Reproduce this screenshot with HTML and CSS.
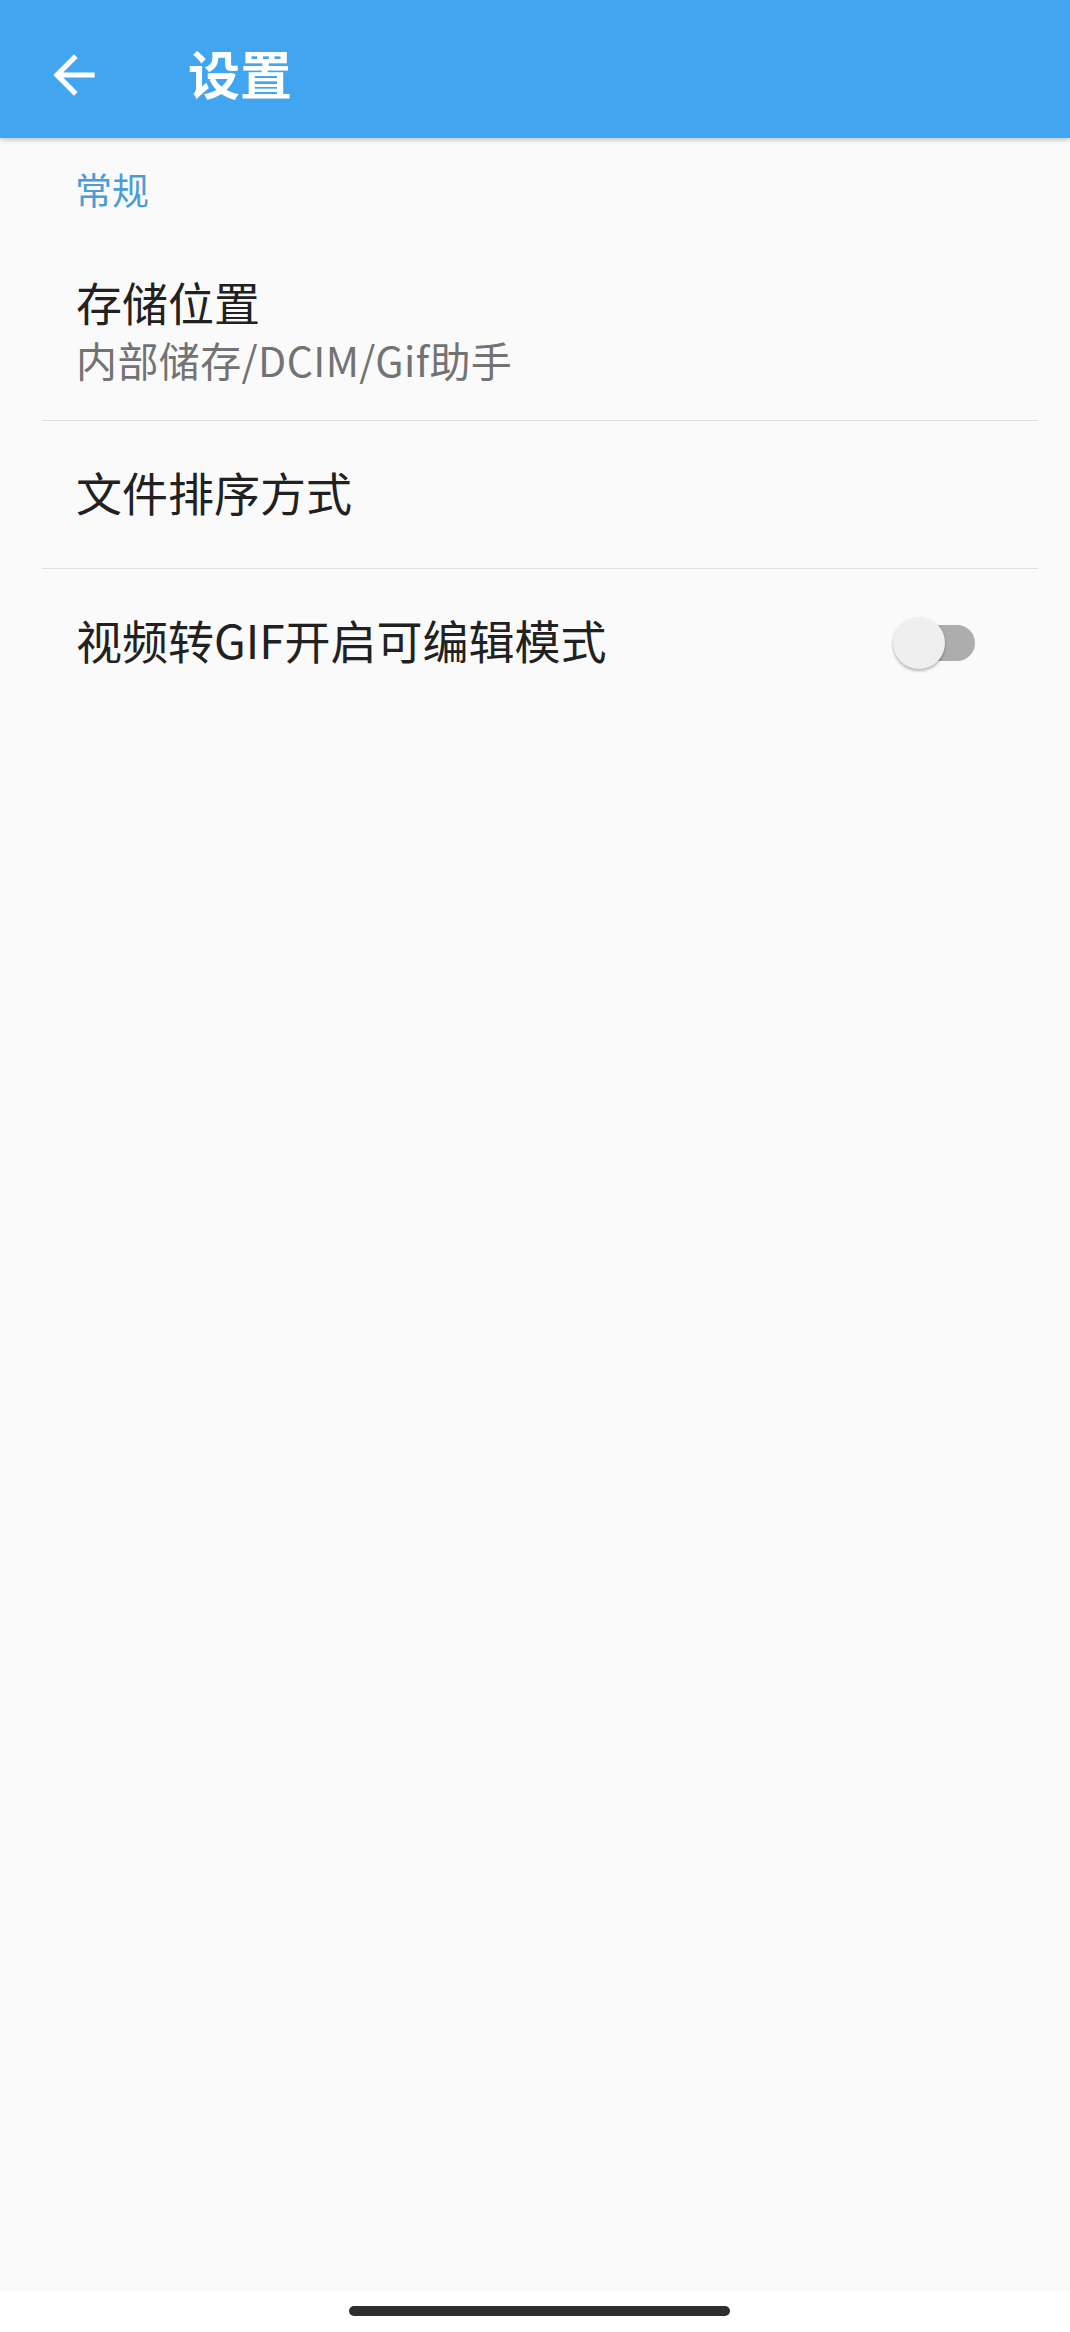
FILE: index.html
```html
<!DOCTYPE html>
<html lang="zh-CN">
<head>
  <meta charset="UTF-8">
  <meta name="viewport" content="width=device-width, initial-scale=1.0">
  <title>设置</title>
  <link rel="stylesheet" href="styles.css">
</head>
<body>
<div class="screen">
  <header class="toolbar">
    <button class="back" aria-label="返回">
      <svg viewBox="0 0 24 24" width="62" height="62"><path d="M20 11H7.83l5.59-5.59L12 4l-8 8 8 8 1.41-1.41L7.83 13H20v-2z" fill="#fff"/></svg>
    </button>
    <h1 class="title">设置</h1>
  </header>

  <main class="prefs">
    <div class="category">常规</div>

    <div class="pref two-line">
      <div class="pref-title">存储位置</div>
      <div class="pref-summary">内部储存/DCIM/Gif助手</div>
    </div>
    <div class="divider"></div>

    <div class="pref">
      <div class="pref-title">文件排序方式</div>
    </div>
    <div class="divider"></div>

    <div class="pref">
      <div class="pref-title">视频转GIF开启可编辑模式</div>
      <div class="switch">
        <span class="track"></span>
        <span class="thumb"></span>
      </div>
    </div>
  </main>

  <div class="navbar"><span class="pill"></span></div>
</div>
</body>
</html>
```

FILE: styles.css
```css
html, body { margin: 0; padding: 0; }
body { font-family: "Noto Sans CJK SC", "Noto Sans", sans-serif; background: #fff; }
.screen { width: 1070px; height: 2332px; display: flex; flex-direction: column; }

.toolbar { height: 138px; background: #42a5f0; display: flex; align-items: center; box-shadow: 0 2px 5px rgba(0,0,0,0.22); position: relative; z-index: 1; }
.back { width: 62px; height: 62px; margin: 12px 0 0 43px; padding: 0; border: none; background: none; display: flex; }
.title { margin: 0 0 0 83px; font-size: 52px; line-height: 52px; font-weight: 700; color: #fff; padding-top: 8px; }

.prefs { flex: 1; background: #fafafa; }
.category { padding: 31px 0 0 75px; font-size: 37px; line-height: 40px; color: #4c9dd6; }

.pref { display: flex; align-items: center; justify-content: space-between; height: 147px; padding: 0 95px 0 76px; }
.pref .pref-title { margin-bottom: 8px; }
.pref.two-line { flex-direction: column; align-items: flex-start; justify-content: center; height: auto; padding-top: 68px; padding-bottom: 39px; }
.pref.two-line .pref-title { margin-bottom: 0; }
.pref-title { font-size: 46px; line-height: 48px; color: #212121; }
.pref-summary { font-size: 41px; line-height: 44px; letter-spacing: 0.4px; color: #737373; margin-top: 12px; }

.divider { height: 1px; background: #dedede; margin: 0 32px 0 42px; }

.switch { position: relative; width: 88px; height: 52px; }
.track { position: absolute; left: 12px; top: 8px; width: 76px; height: 36px; border-radius: 18px; background: #adadad; }
.thumb { position: absolute; left: 6px; top: 0; width: 52px; height: 52px; border-radius: 50%; background: #efefef; box-shadow: 0 2px 3px rgba(0,0,0,0.28); }

.navbar { height: 41px; background: #fff; display: flex; justify-content: center; padding-left: 9px; }
.pill { width: 381px; height: 10px; margin-top: 15px; border-radius: 5px; background: #2e2e2e; }
```
